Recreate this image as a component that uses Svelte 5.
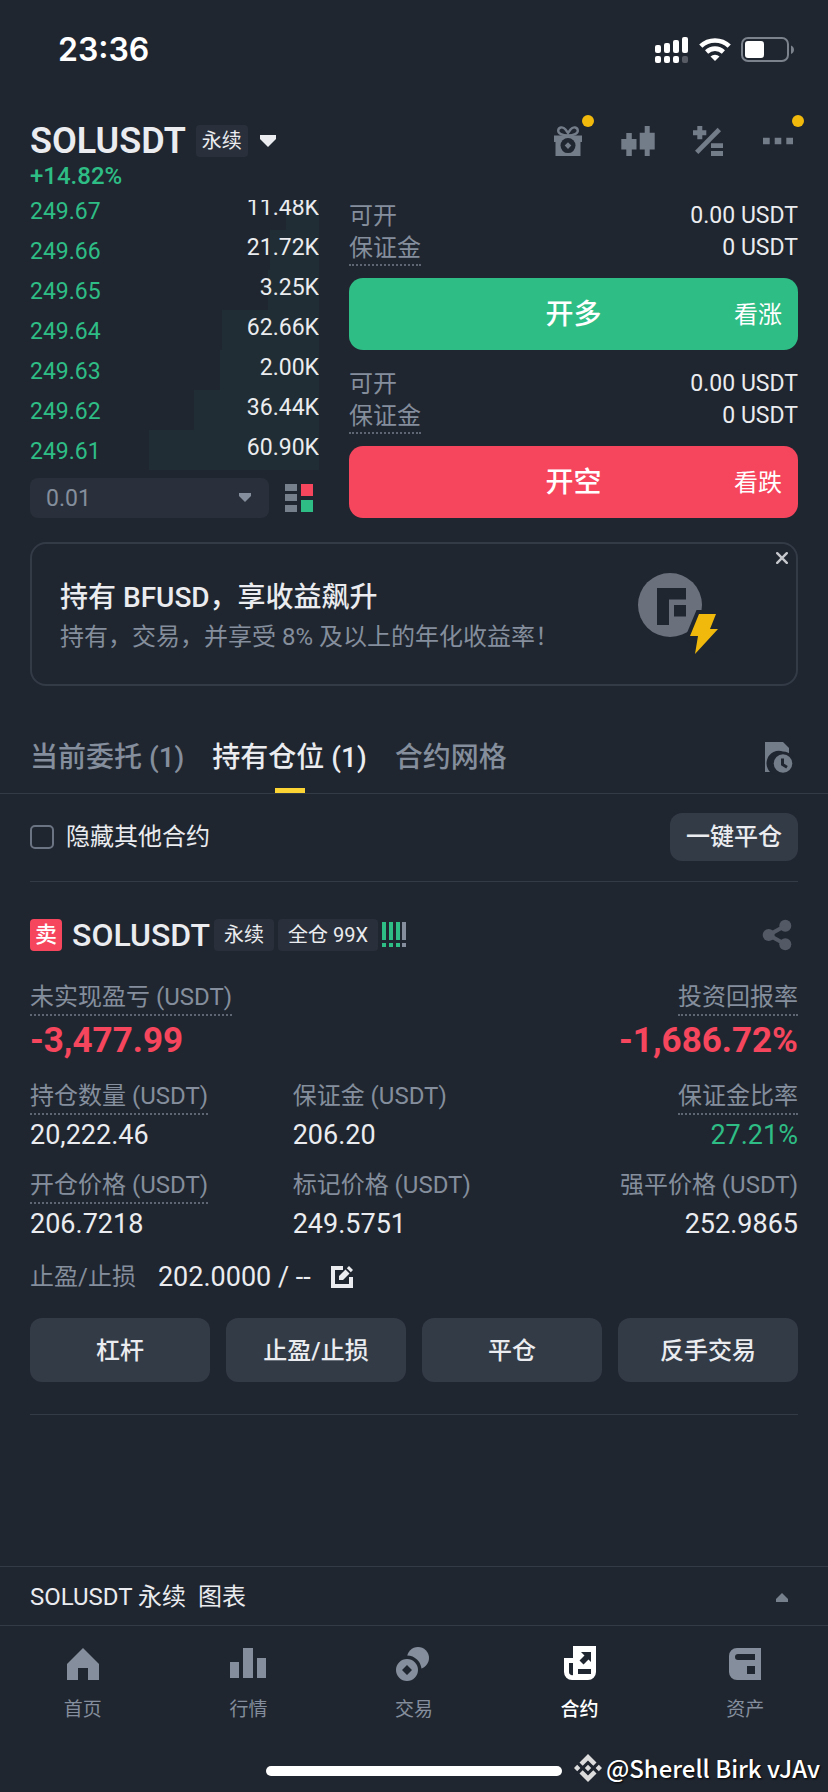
<script>
  let hideOthers = $state(false);
  let activeTab = $state(1);

  // depth is the share of the book width covered by the shaded bar
  const bids = [
    { price: "249.67", amount: "11.48K", depth: 11.5 },
    { price: "249.66", amount: "21.72K", depth: 17 },
    { price: "249.65", amount: "3.25K", depth: 17.7 },
    { price: "249.64", amount: "62.66K", depth: 33.6 },
    { price: "249.63", amount: "2.00K", depth: 34.3 },
    { price: "249.62", amount: "36.44K", depth: 43.3 },
    { price: "249.61", amount: "60.90K", depth: 58.9 },
  ];

  const orders = [
    { side: "long", name: "开多", hint: "看涨" },
    { side: "short", name: "开空", hint: "看跌" },
  ];

  const tabs = ["当前委托 (1)", "持有仓位 (1)", "合约网格"];

  const metrics = [
    { label: "持仓数量 (USDT)", value: "20,222.46", tip: true },
    { label: "保证金 (USDT)", value: "206.20" },
    { label: "保证金比率", value: "27.21%", tip: true, green: true },
    { label: "开仓价格 (USDT)", value: "206.7218", tip: true },
    { label: "标记价格 (USDT)", value: "249.5751" },
    { label: "强平价格 (USDT)", value: "252.9865" },
  ];

  const actions = ["杠杆", "止盈/止损", "平仓", "反手交易"];

  const nav = [
    { id: "home", label: "首页" },
    { id: "markets", label: "行情" },
    { id: "trade", label: "交易" },
    { id: "futures", label: "合约" },
    { id: "assets", label: "资产" },
  ];
</script>

<div class="page">
  <div class="status">
    <span class="time">23:36</span>
    <div class="status-icons">
      <svg width="34" height="26" viewBox="0 0 34 26" fill="#fff">
        <rect x="0" y="8" width="6" height="8" rx="2" />
        <rect x="9" y="6" width="6" height="10" rx="2" />
        <rect x="18" y="3" width="6" height="13" rx="2" />
        <rect x="27" y="0" width="6" height="16" rx="2" />
        <rect x="0" y="19" width="6" height="7" rx="2" />
        <rect x="9" y="19" width="6" height="7" rx="2" />
        <rect x="18" y="19" width="6" height="7" rx="2" />
        <rect x="27" y="19" width="6" height="7" rx="2" opacity="0.25" />
      </svg>
      <svg width="32" height="26" viewBox="0 0 32 26" fill="none" stroke="#fff" stroke-width="4.6">
        <path d="M1.8 9.2a20.4 20.4 0 0 1 28.4 0" />
        <path d="M7.6 15a12.2 12.2 0 0 1 16.8 0" />
        <path d="M11.5 19.5a6.6 6.6 0 0 1 9 0L16 24z" fill="#fff" stroke="none" />
      </svg>
      <svg width="54" height="26" viewBox="0 0 54 26">
        <rect x="1" y="1" width="46" height="23" rx="6" fill="none" stroke="#7b828c" stroke-width="2" />
        <rect x="4" y="4" width="19" height="17" rx="3" fill="#fff" />
        <path d="M50 8.5c4 1.5 4 7 0 8.5z" fill="#7b828c" />
      </svg>
    </div>
  </div>

  <header class="header">
    <div class="title-row">
      <button class="symbol">
        <h1>SOLUSDT</h1>
        <span class="badge small">永续</span>
        <svg class="caret" width="16" height="12" viewBox="0 0 16 12" fill="#eaecef">
          <path d="M0 0h16v4l-8 8-8-8z" />
        </svg>
      </button>
      <div class="tools">
        <button class="tool dot" aria-label="奖励">
          <svg width="36" height="36" viewBox="0 0 36 36">
            <path d="M4 12.5h28V19h-1.5v14h-25V19H4z" fill="#737c89" />
            <path d="M18 12.500C12 12.500 8.200 10.500 8.200 7.800 8.200 4 13 3.200 15.500 6.500L18 10l2.500-3.500C23 3.200 27.800 4 27.800 7.800c0 2.700-3.800 4.700-9.800 4.700" fill="none" stroke="#737c89" stroke-width="2.4" />
            <circle cx="18" cy="22.6" r="7.5" fill="#202630" />
            <path d="M18 19.300l3.300 3.300-3.300 3.300-3.300-3.300z" fill="#737c89" />
          </svg>
        </button>
        <button class="tool" aria-label="K线">
          <svg width="36" height="36" viewBox="0 0 36 36" fill="#737c89">
            <path d="M6.300 10h5.500v6h4.700v10.500h-4.700V33H6.300v-6.500H1.300V16h5z" />
            <path d="M24.700 3h5v6.700h5v16.800h-5V33h-5v-6.500h-5V9.700h5z" />
          </svg>
        </button>
        <button class="tool" aria-label="计算器">
          <svg width="36" height="36" viewBox="0 0 36 36" fill="#737c89">
            <path d="M7.300 3h5v4.300h4v5h-4v4h-5v-4H3v-5h4.300z" />
            <path d="M6.700 29.300l22.600-22.800" stroke="#737c89" stroke-width="4.7" />
            <path d="M21 20.300h12V25H21zM21 28h12v5H21z" />
          </svg>
        </button>
        <button class="tool dot" aria-label="更多">
          <svg width="36" height="36" viewBox="0 0 36 36" fill="#737c89">
            <path d="M3 14.700h6.700v6.600H3zM14.700 14.700h6.600v6.600h-6.600zM26.300 14.700H33v6.600h-6.700z" />
          </svg>
        </button>
      </div>
    </div>
    <div class="change">+14.82%</div>
  </header>

  <section class="trade">
    <div class="book">
      <ul class="bids">
        {#each bids as bid}
          <li>
            <span class="depth" style="width: {bid.depth}%"></span>
            <span class="price">{bid.price}</span>
            <span class="amount">{bid.amount}</span>
          </li>
        {/each}
      </ul>
      <div class="book-footer">
        <div class="precision">
          <select aria-label="精度">
            <option>0.01</option>
            <option>0.1</option>
            <option>1</option>
          </select>
          <svg width="12" height="9" viewBox="0 0 12 9" fill="#848e9c">
            <path d="M0 0h12v3L6 9 0 3z" />
          </svg>
        </div>
        <button class="layout" aria-label="盘口样式">
          <svg width="28" height="28" viewBox="0 0 28 28">
            <path d="M0 0h12v7H0zM0 10h12v7H0zM0 21h12v7H0z" fill="#76808d" />
            <path d="M16 0h12v12H16z" fill="#f6465d" />
            <path d="M16 16h12v12H16z" fill="#2ebd85" />
          </svg>
        </button>
      </div>
    </div>

    <div class="forms">
      {#each orders as order}
        <div class="order">
          <div class="line">
            <span class="label">可开</span>
            <span>0.00 USDT</span>
          </div>
          <div class="line">
            <span class="label tip">保证金</span>
            <span>0 USDT</span>
          </div>
          <button class="submit {order.side}">
            <span class="submit-name">{order.name}</span>
            <span class="submit-hint">{order.hint}</span>
          </button>
        </div>
      {/each}
    </div>
  </section>

  <aside class="banner">
    <div>
      <h2>持有 BFUSD，享收益飙升</h2>
      <p>持有，交易，并享受 8% 及以上的年化收益率！</p>
    </div>
    <svg class="coin" width="80" height="82" viewBox="0 0 80 82">
      <circle cx="32" cy="32" r="32" fill="#6a707c" />
      <path d="M19 15h29v11.500H31V52H19zM36 32h12v11.500H36z" fill="#202630" />
      <path d="M58.500 37H80v43L46 67z" fill="#202630" />
      <path d="M61 41h17l-6 15h8L57 81l3-18h-8z" fill="#f0b90b" />
    </svg>
    <button class="close" aria-label="关闭">
      <svg width="12" height="12" viewBox="0 0 12 12" fill="none" stroke="#c5c8cd" stroke-width="2.4" stroke-linecap="round">
        <path d="M1.200 1.200l9.600 9.600M10.800 1.200l-9.600 9.600" />
      </svg>
    </button>
  </aside>

  <nav class="tabs">
    {#each tabs as tab, i}
      <button class="tab" class:active={activeTab === i} onclick={() => (activeTab = i)}>
        {tab}
      </button>
    {/each}
    <button class="tool history" aria-label="历史记录">
      <svg width="36" height="36" viewBox="0 0 36 36">
        <path d="M5 3h18l6 6v24H5z" fill="#737c89" />
        <path d="M23 12.500a12 12 0 0 1 12 12V36H14.900A12 12 0 0 1 23 12.500z" fill="#202630" />
        <circle cx="23" cy="24.5" r="9.3" fill="#737c89" />
        <path d="M22.500 19.500v6l4.500 2.700" fill="none" stroke="#202630" stroke-width="3" />
      </svg>
    </button>
  </nav>

  <div class="filter">
    <label>
      <input type="checkbox" bind:checked={hideOthers} />
      隐藏其他合约
    </label>
    <button class="close-all">一键平仓</button>
  </div>

  <section class="position">
    <div class="position-head">
      <span class="side">卖</span>
      <h3>SOLUSDT</h3>
      <div class="badges">
        <span class="badge">永续</span>
        <span class="badge">全仓 99X</span>
        <svg width="24" height="26" viewBox="0 0 24 26">
          <path d="M0 0h4v18H0zM7 0h4v18H7zM14 0h4v18h-4zM0 21h4v4H0zM7 21h4v4H7zM14 21h4v4h-4z" fill="#2ebd85" />
          <path d="M20 0h4v18h-4zM20 21h4v4h-4z" fill="#848e9c" />
        </svg>
      </div>
      <button class="tool share" aria-label="分享">
        <svg width="36" height="36" viewBox="0 0 36 36" fill="#535a65">
          <path d="M25.300 8.700L8.700 18l16.600 9.300" fill="none" stroke="#535a65" stroke-width="4" />
          <circle cx="25.3" cy="8.7" r="6" />
          <circle cx="8.7" cy="18" r="6" />
          <circle cx="25.3" cy="27.3" r="6" />
        </svg>
      </button>
    </div>

    <dl class="pnl">
      <div>
        <dt class="tip">未实现盈亏 (USDT)</dt>
        <dd>-3,477.99</dd>
      </div>
      <div class="end">
        <dt class="tip">投资回报率</dt>
        <dd>-1,686.72%</dd>
      </div>
    </dl>

    <dl class="metrics">
      {#each metrics as m, i}
        <div class:end={i % 3 === 2}>
          <dt class:tip={m.tip}>{m.label}</dt>
          <dd class:green={m.green}>{m.value}</dd>
        </div>
      {/each}
    </dl>

    <div class="tpsl">
      <span class="label">止盈/止损</span>
      <span class="tpsl-value">202.0000 / --</span>
      <button class="edit" aria-label="编辑">
        <svg width="22" height="22" viewBox="0 0 22 22" fill="#eaecef">
          <path d="M0 0h12v4H4v14h14v-7h4v11H0z" />
          <path d="M8 14v-4l6.500-6.500 4 4L12 14zM15.800 2.200L18 0l4 4-2.200 2.200z" />
        </svg>
      </button>
    </div>

    <div class="actions">
      {#each actions as action}
        <button>{action}</button>
      {/each}
    </div>
  </section>

  <footer>
    <button class="chart">
      <span>SOLUSDT 永续&nbsp; 图表</span>
      <svg width="12" height="9" viewBox="0 0 12 9" fill="#76808d">
        <path d="M6 0l6 6v3H0V6z" />
      </svg>
    </button>
    <nav class="nav">
      {#each nav as item}
        <a href="#{item.id}" class:active={item.id === "futures"}>
          <svg width="36" height="36" viewBox="0 0 36 36" fill="currentColor">
            {#if item.id === "home"}
              <path d="M18 2l16 16v16H23V22H13v12H2V18z" />
            {:else if item.id === "markets"}
              <path d="M0 16h9v16H0zM13 2h10v30H13zM27 12h9v20h-9z" />
            {:else if item.id === "trade"}
              <circle cx="22" cy="12" r="11" />
              <circle cx="11" cy="24" r="14.5" fill="#202630" />
              <path fill-rule="evenodd" d="M11 13a11 11 0 1 1 0 22 11 11 0 0 1 0-22zm0 6l-5 5 5 5 5-5z" />
            {:else if item.id === "futures"}
              <path fill-rule="evenodd" d="M11 0h23v26a8 8 0 0 1-8 8H10a8 8 0 0 1-8-8V12h9zM7 17v9a3 3 0 0 0 4 3V17zM16 23v5h13v-5zM19 6l3.500 3.500-5 5 4 4 5-5L29 16V6z" />
            {:else}
              <path fill-rule="evenodd" d="M10 2h24v32H10a8 8 0 0 1-8-8V10a8 8 0 0 1 8-8zM11 8a3 3 0 0 0 0 6h17V8zM20 20v8h8v-8z" />
            {/if}
          </svg>
          <span>{item.label}</span>
        </a>
      {/each}
    </nav>
    <div class="home-bar"></div>
  </footer>

  <div class="watermark">
    <svg width="28" height="28" viewBox="0 0 28 28" fill="#dcdcdc">
      <path d="M14 0l8.500 8.500-3.200 3.200L14 6.400l-5.300 5.300-3.200-3.200z" />
      <path d="M14 28l8.500-8.500-3.200-3.200-5.300 5.300-5.300-5.300-3.200 3.200z" />
      <path d="M14 10.800l3.200 3.200-3.200 3.200-3.200-3.200zM3.200 10.800L6.400 14l-3.200 3.200L0 14zM24.800 10.800L28 14l-3.200 3.200-3.200-3.200z" />
    </svg>
    <span>@Sherell Birk vJAv</span>
  </div>
</div>

<style>
  :global(body) {
    background: #202630;
  }
  .page {
    position: relative;
    display: flex;
    flex-direction: column;
    min-height: 100vh;
    background: #202630;
    color: #eaecef;
    font-family: Roboto, "Noto Sans CJK SC", sans-serif;
    font-size: 24px;
    line-height: 32px;
  }
  .page * {
    box-sizing: border-box;
  }
  svg {
    display: block;
    flex: none;
  }
  h1,
  h2,
  h3,
  p,
  ul,
  dl,
  dd {
    margin: 0;
    padding: 0;
  }
  button {
    margin: 0;
    padding: 0;
    border: 0;
    background: none;
    color: inherit;
    font: inherit;
    cursor: pointer;
  }

  .status {
    display: flex;
    justify-content: space-between;
    align-items: center;
    height: 100px;
    padding: 0 33px 0 58px;
  }
  .time {
    color: #fff;
    font-family: Inter, sans-serif;
    font-size: 32px;
    font-weight: 600;
  }
  .status-icons {
    display: flex;
    gap: 10px;
  }

  .header {
    padding: 20px 30px 10px;
  }
  .title-row {
    display: flex;
    justify-content: space-between;
    align-items: center;
    height: 42px;
  }
  .symbol {
    display: flex;
    align-items: center;
  }
  h1 {
    font-size: 36px;
    font-weight: 600;
    line-height: 44px;
  }
  .badge {
    padding: 0 10px;
    border-radius: 4px;
    background: #2a303b;
    font-size: 20px;
    line-height: 32px;
  }
  .badge.small {
    margin: 0 12px 0 10px;
    padding: 0 6px;
  }
  .tools {
    display: flex;
    gap: 34px;
    padding-right: 2px;
  }
  .tool {
    position: relative;
  }
  .tool.dot::after {
    content: "";
    position: absolute;
    top: -8px;
    right: -8px;
    width: 12px;
    height: 12px;
    border-radius: 50%;
    background: #f0b90b;
  }
  .change {
    color: #2ebd85;
    font-size: 24px;
    font-weight: 500;
    line-height: 28px;
  }

  .trade {
    display: grid;
    grid-template-columns: 289fr 449fr;
    gap: 30px;
    padding: 0 30px;
  }
  .bids {
    display: flex;
    flex-direction: column;
    justify-content: flex-end;
    height: 270px;
    overflow: hidden;
    list-style: none;
    font-size: 23px;
  }
  .bids li {
    position: relative;
    display: flex;
    flex: none;
    justify-content: space-between;
    align-items: flex-start;
    height: 40px;
  }
  .depth {
    position: absolute;
    top: 0;
    right: 0;
    bottom: 0;
    background: #212d34;
  }
  .price {
    color: #2ebd85;
    line-height: 44px;
  }
  .amount {
    position: relative;
    line-height: 36px;
  }
  .book-footer {
    display: flex;
    align-items: center;
    gap: 16px;
    margin-top: 8px;
    padding-right: 6px;
  }
  .precision {
    position: relative;
    flex: 1;
  }
  select {
    display: block;
    width: 100%;
    height: 40px;
    padding: 2px 16px 0;
    border: 0;
    border-radius: 8px;
    appearance: none;
    background: #2a303b;
    color: #848e9c;
    font: inherit;
    font-size: 23px;
  }
  .precision svg {
    position: absolute;
    top: 15px;
    right: 18px;
    pointer-events: none;
  }

  .forms {
    display: flex;
    flex-direction: column;
    gap: 18px;
  }
  .line {
    display: flex;
    justify-content: space-between;
    align-items: flex-start;
  }
  .line span:last-child {
    font-size: 23px;
  }
  .label,
  dt {
    color: #848e9c;
  }
  .tip {
    border-bottom: 2px dotted #5e6673;
  }
  .submit {
    display: grid;
    grid-template-columns: 1fr auto 1fr;
    align-items: center;
    width: 100%;
    height: 72px;
    margin-top: 12px;
    padding: 2px 16px 0;
    border-radius: 14px;
    color: #fff;
  }
  .submit.long {
    background: #2ebd85;
  }
  .submit.short {
    background: #f6465d;
  }
  .submit-name {
    grid-column: 2;
    font-size: 28px;
    font-weight: 500;
  }
  .submit-hint {
    text-align: right;
  }

  .banner {
    position: relative;
    display: flex;
    justify-content: space-between;
    align-items: flex-start;
    margin: 24px 30px 0;
    padding: 34px 28px 28px;
    border: 2px solid #333b47;
    border-radius: 16px;
  }
  h2 {
    font-size: 28px;
    font-weight: 500;
    line-height: 40px;
  }
  .banner p {
    color: #848e9c;
    line-height: 38px;
  }
  .coin {
    margin: -5px 50px 0 0;
  }
  .close {
    position: absolute;
    top: 8px;
    right: 8px;
  }

  .tabs {
    display: flex;
    align-items: center;
    gap: 28px;
    height: 74px;
    margin-top: 34px;
    padding: 0 32px 0 30px;
    border-bottom: 1px solid #333b47;
  }
  .tab {
    position: relative;
    height: 100%;
    padding-top: 2px;
    color: #848e9c;
    font-size: 28px;
    font-weight: 500;
  }
  .tab.active {
    color: #eaecef;
  }
  .tab.active::after {
    content: "";
    position: absolute;
    bottom: 0;
    left: calc(50% - 15px);
    width: 30px;
    height: 5px;
    background: #fcd535;
  }
  .history {
    margin-left: auto;
  }

  .filter {
    display: flex;
    justify-content: space-between;
    align-items: center;
    height: 88px;
    margin: 0 30px;
    padding-bottom: 1px;
    border-bottom: 1px solid #333b47;
  }
  .filter label {
    display: flex;
    align-items: center;
    gap: 12px;
  }
  input {
    width: 24px;
    height: 24px;
    margin: 0;
    border: 2px solid #6b7482;
    border-radius: 5px;
    appearance: none;
  }
  input:checked {
    background: #eaecef;
  }
  .close-all {
    height: 48px;
    padding: 0 16px;
    border-radius: 12px;
    background: #333b47;
    font-weight: 500;
  }

  .position {
    margin: 0 30px;
    padding: 37px 0 32px;
    border-bottom: 1px solid #333b47;
  }
  .position-head {
    display: flex;
    align-items: center;
    height: 32px;
  }
  .side {
    width: 32px;
    border-radius: 4px;
    background: #f6465d;
    color: #fff;
    font-size: 22px;
    font-weight: 500;
    text-align: center;
  }
  h3 {
    margin: 0 4px 0 10px;
    font-size: 32px;
    font-weight: 500;
  }
  .badges {
    display: flex;
    align-items: center;
    gap: 4px;
  }
  .share {
    margin: 0 2px 0 auto;
  }
  .pnl {
    display: flex;
    justify-content: space-between;
    margin: 31px 0 15px;
  }
  .pnl dd {
    color: #f6465d;
    font-size: 35px;
    font-weight: 700;
    line-height: 50px;
  }
  dt {
    width: fit-content;
    padding-bottom: 2px;
    border-bottom: 2px solid transparent;
    line-height: 30px;
  }
  dt.tip {
    border-bottom: 2px dotted #5e6673;
  }
  .end {
    text-align: right;
  }
  .end dt {
    margin-left: auto;
  }
  .metrics {
    display: grid;
    grid-template-columns: repeat(3, 1fr);
    gap: 15px 20px;
  }
  .metrics dd {
    font-size: 27px;
    line-height: 40px;
  }
  .metrics .green {
    color: #2ebd85;
  }
  .tpsl {
    display: flex;
    align-items: center;
    height: 38px;
    margin: 14px 0 22px;
  }
  .tpsl-value {
    margin: 0 20px 0 22px;
    font-size: 27px;
  }
  .actions {
    display: grid;
    grid-template-columns: repeat(4, 1fr);
    gap: 16px;
  }
  .actions button {
    height: 64px;
    padding-top: 2px;
    border-radius: 12px;
    background: #333b47;
    font-weight: 500;
  }

  footer {
    margin-top: auto;
  }
  .chart {
    display: flex;
    justify-content: space-between;
    align-items: center;
    width: 100%;
    height: 60px;
    padding: 2px 40px 0 30px;
    border-top: 1px solid #333b47;
    border-bottom: 1px solid #333b47;
  }
  .nav {
    display: flex;
    padding-top: 20px;
  }
  .nav a {
    display: flex;
    flex: 1;
    flex-direction: column;
    align-items: center;
    gap: 16px;
    color: #848e9c;
    font-size: 19px;
    line-height: 24px;
    text-decoration: none;
  }
  .nav a.active {
    color: #fff;
    font-weight: 500;
  }
  .home-bar {
    width: 296px;
    height: 10px;
    margin: 44px auto 16px;
    border-radius: 5px;
    background: #fff;
  }
  .watermark {
    position: absolute;
    right: 8px;
    bottom: 6px;
    display: flex;
    align-items: center;
    gap: 4px;
    color: #fff;
    font-family: "Noto Sans CJK SC", sans-serif;
    font-size: 24px;
    font-weight: 500;
    line-height: 36px;
    text-shadow: 1px 1px 2px #000;
  }
</style>
